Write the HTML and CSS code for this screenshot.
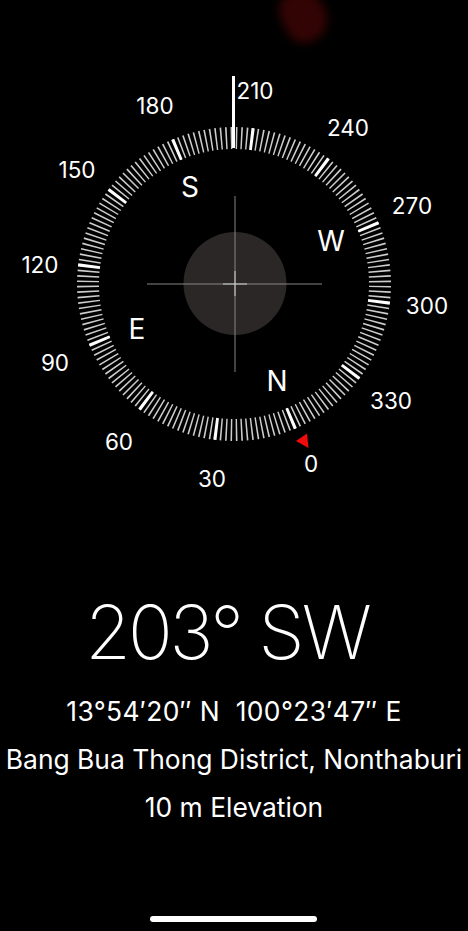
FILE: index.html
```html
<!DOCTYPE html>
<html lang="en">
<head>
<meta charset="utf-8">
<title>Compass</title>
<link rel="stylesheet" href="styles.css">
</head>
<body>
<main class="screen">
  <div class="glow"></div>
  <svg class="dial" width="468" height="560" viewBox="0 0 468 560">
    <circle class="bubble" cx="235" cy="283.5" r="51.5"/>
    <line class="cross" x1="147" y1="284" x2="322" y2="284"/>
    <line class="cross" x1="235" y1="196" x2="235" y2="372"/>
    <line class="cross-c" x1="223" y1="284" x2="247" y2="284"/>
    <line class="cross-c" x1="235" y1="271" x2="235" y2="296"/>

    <circle class="ticks-minor" cx="234" cy="284" r="146" pathLength="360" transform="rotate(1 234 284)"/>
    <circle class="ticks-major" cx="234" cy="284" r="146" pathLength="360" transform="rotate(7 234 284)"/>

    <rect class="needle" x="232" y="76" width="3" height="72"/>
    <polygon class="north" points="296,441 307,433.5 308.5,448"/>

    <text class="num" x="311" y="463">0</text>
    <text class="num" x="212" y="478">30</text>
    <text class="num" x="119" y="441">60</text>
    <text class="num" x="55" y="362">90</text>
    <text class="num" x="40" y="264">120</text>
    <text class="num" x="77" y="169">150</text>
    <text class="num" x="155" y="105">180</text>
    <text class="num" x="255" y="90">210</text>
    <text class="num" x="348" y="127">240</text>
    <text class="num" x="412" y="205">270</text>
    <text class="num" x="427" y="305">300</text>
    <text class="num" x="391" y="400">330</text>

    <text class="card" x="277" y="381">N</text>
    <text class="card" x="137" y="329">E</text>
    <text class="card" x="190" y="187">S</text>
    <text class="card" x="331" y="241">W</text>
  </svg>

  <section class="readout">
    <h1 class="heading">203° SW</h1>
    <p class="line coords">13°54′20″ N&nbsp; 100°23′47″ E</p>
    <p class="line">Bang Bua Thong District, Nonthaburi</p>
    <p class="line">10 m Elevation</p>
  </section>

  <div class="home"></div>
</main>
</body>
</html>
```

FILE: styles.css
```css
html, body {
  margin: 0;
  padding: 0;
  background: #000;
}

.screen {
  position: relative;
  width: 468px;
  height: 931px;
  overflow: hidden;
  background: #000;
  color: #fff;
  font-family: Inter, "Noto Sans", "Liberation Sans", sans-serif;
}

.glow {
  position: absolute;
  left: 282px;
  top: -10px;
  width: 44px;
  height: 52px;
  border-radius: 40% 60% 55% 45%;
  background: #330404;
  filter: blur(5px);
  transform: rotate(-25deg);
}

.dial {
  display: block;
}

.bubble {
  fill: #2b2727;
}

.cross {
  stroke: #858585;
  stroke-width: 1;
}

.cross-c {
  stroke: #cfcfcf;
  stroke-width: 1;
}

.ticks-minor {
  fill: none;
  stroke: #cdcdcd;
  stroke-width: 22;
  stroke-dasharray: 0.6 1.4;
  stroke-dashoffset: 0.3;
}

.ticks-major {
  fill: none;
  stroke: #fff;
  stroke-width: 22;
  stroke-dasharray: 1.2 28.8;
  stroke-dashoffset: 0.6;
}

.needle {
  fill: #fff;
}

.north {
  fill: #f00a0a;
}

.num {
  fill: #fff;
  font-family: Inter, "Liberation Sans", sans-serif;
  font-size: 22.5px;
  text-anchor: middle;
  dominant-baseline: central;
}

.card {
  fill: #fff;
  font-family: Inter, "Liberation Sans", sans-serif;
  font-size: 28px;
  text-anchor: middle;
  dominant-baseline: central;
}

.readout {
  display: flex;
  flex-direction: column;
  align-items: center;
  text-align: center;
}

.heading {
  margin: 35px 0 18px;
  padding-right: 14px;
  font-size: 74px;
  line-height: 74px;
  font-weight: 200;
  letter-spacing: -3px;
}

.line {
  margin: 0;
  font-size: 26.4px;
  line-height: 48px;
  font-weight: 400;
  white-space: nowrap;
}

.coords {
  letter-spacing: 0.4px;
}

.home {
  position: absolute;
  left: 150px;
  bottom: 9px;
  width: 167px;
  height: 6px;
  border-radius: 3px;
  background: #fff;
}
```
